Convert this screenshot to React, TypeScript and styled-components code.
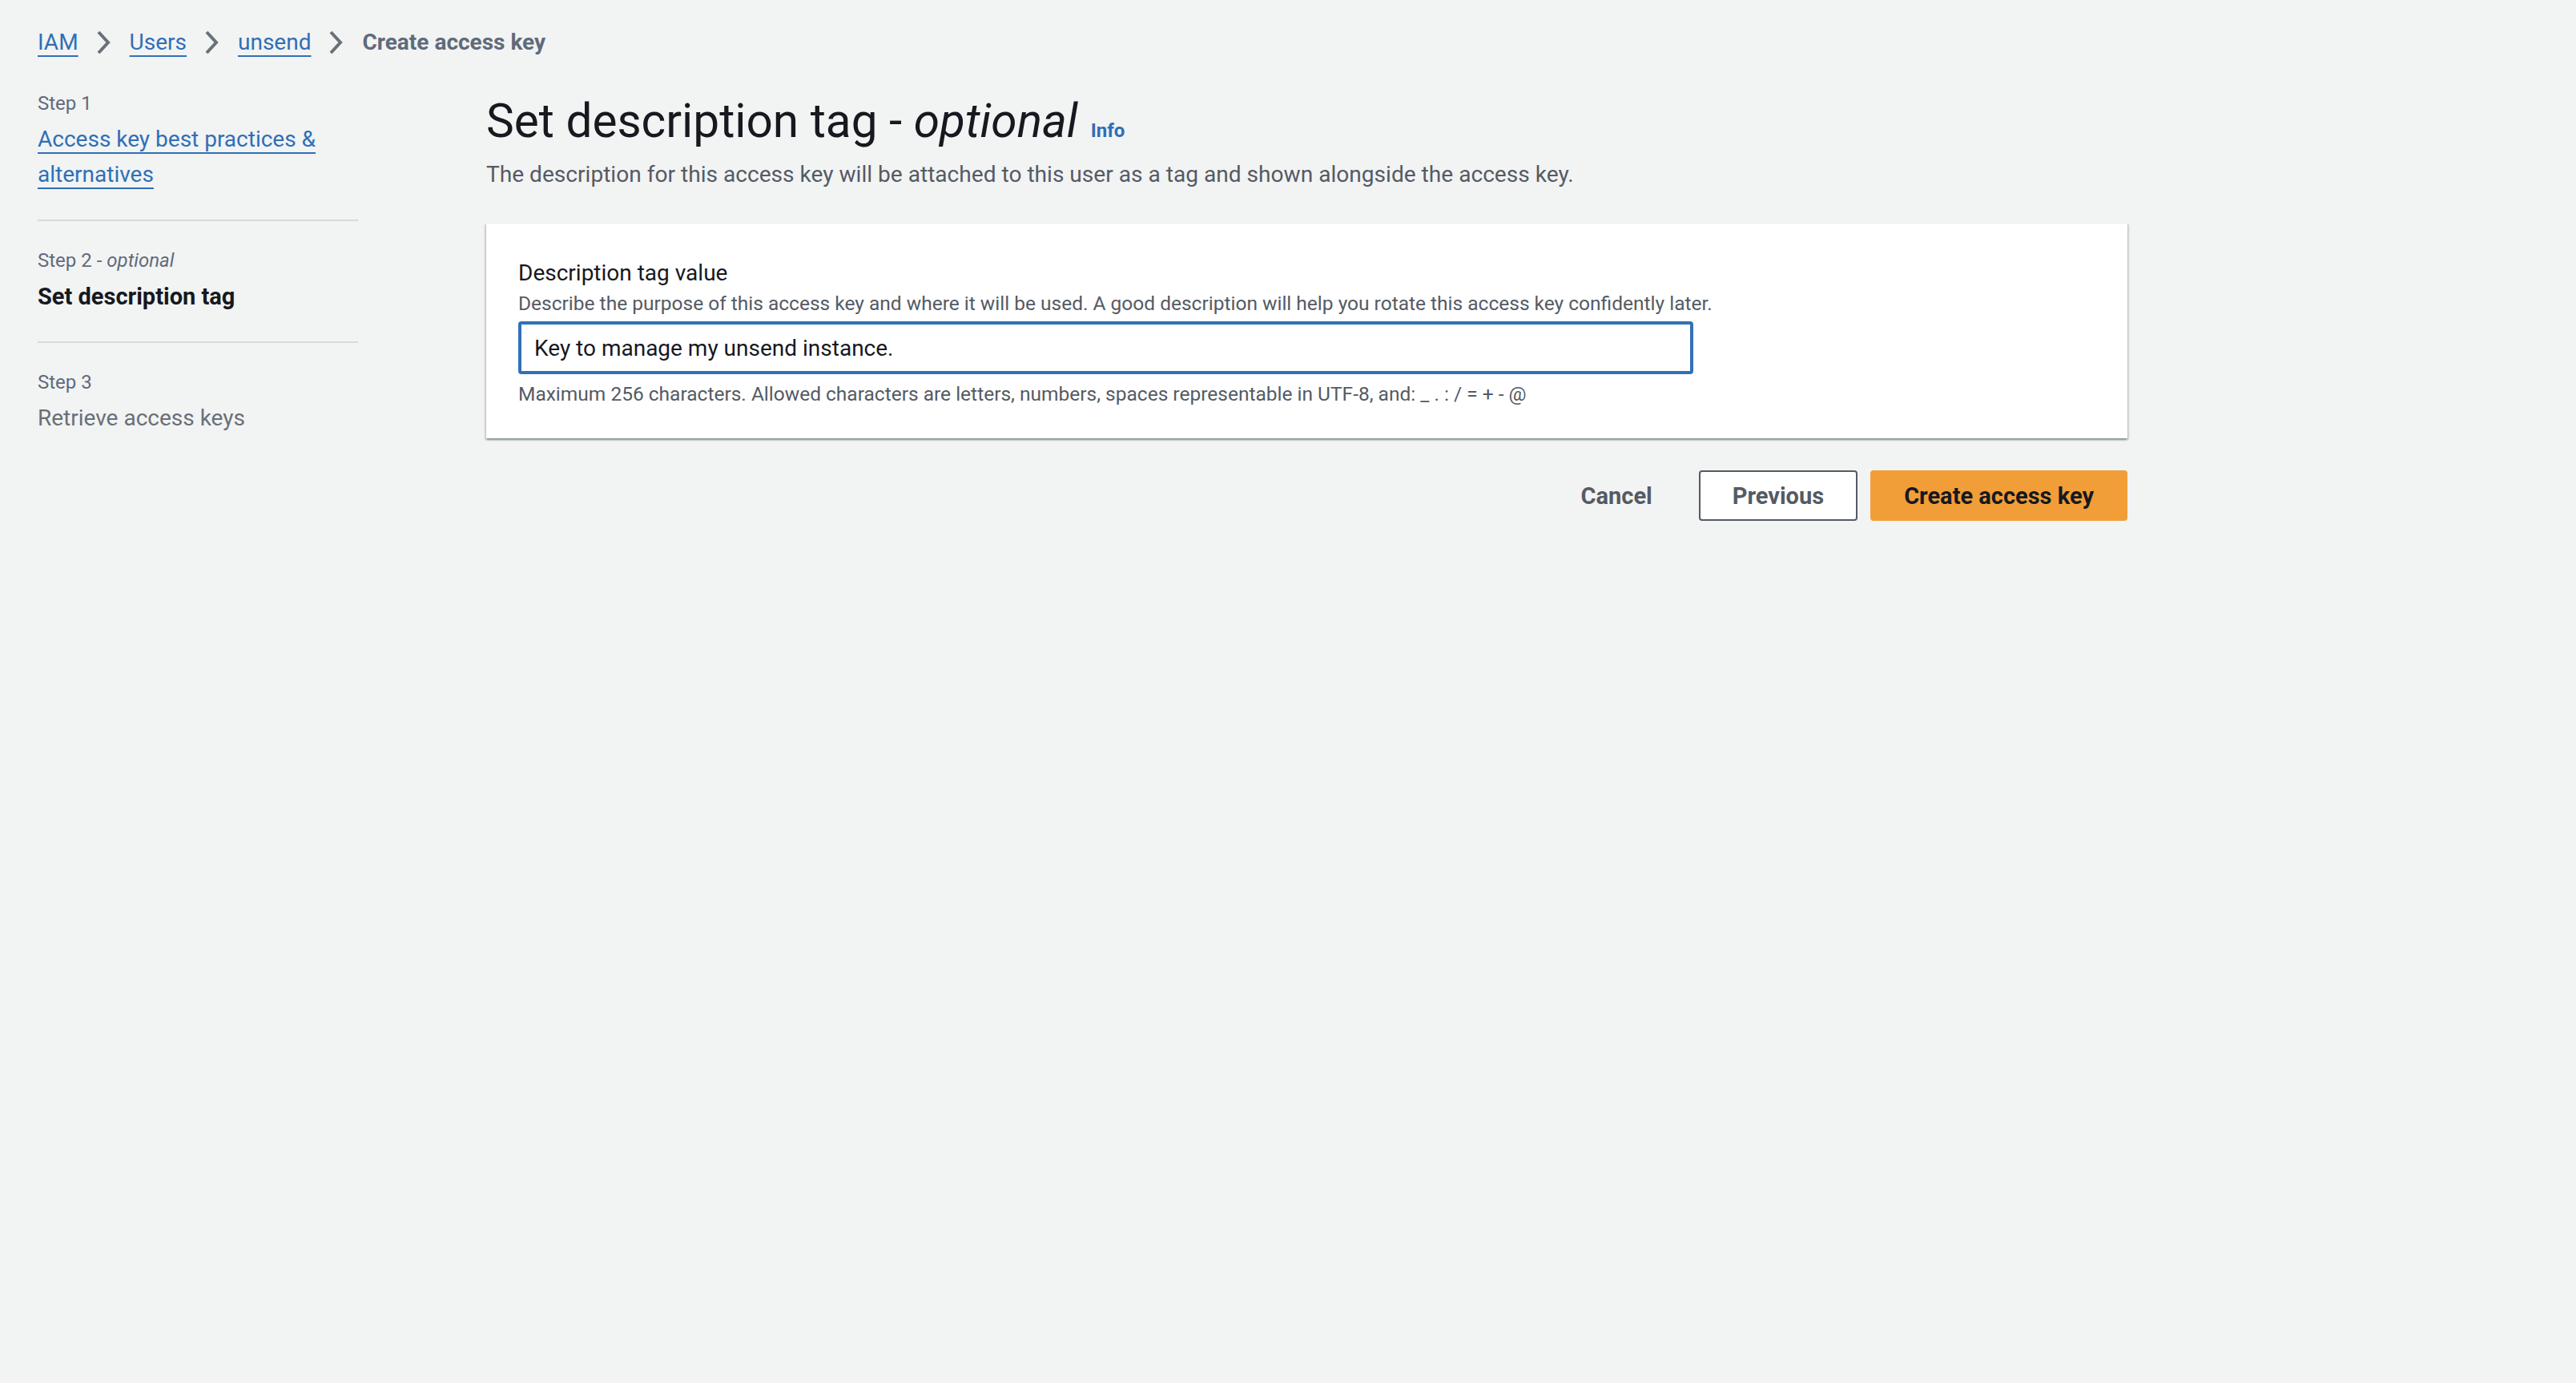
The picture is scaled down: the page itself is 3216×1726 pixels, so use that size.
import styled, { createGlobalStyle } from 'styled-components';

const GlobalStyle = createGlobalStyle`
  html, body {
    margin: 0;
    padding: 0;
    background: #f2f3f3;
  }
  body {
    font-family: Roboto, "Noto Sans", Arial, sans-serif;
    color: #16191f;
    min-height: 100vh;
  }
  * {
    box-sizing: border-box;
  }
`;

const Page = styled.div`
  padding: 31px 560px 0 47px;
  min-height: 1726px;
  background: #f2f3f3;
`;

const Breadcrumbs = styled.nav`
  display: flex;
  align-items: center;
  height: 44px;
  font-size: 28px;
  line-height: 44px;
`;

const Crumb = styled.a`
  color: #2f6fb7;
  text-decoration: underline;
  text-decoration-thickness: 2px;
  text-underline-offset: 7px;
`;

const CurrentCrumb = styled.span`
  color: #5f6b7a;
  font-weight: 700;
`;

const ChevronBox = styled.span`
  display: inline-flex;
  margin: 0 24px 0 22px;
  color: #687078;
`;

const Chevron = () => (
  <ChevronBox>
    <svg width="18" height="30" viewBox="0 0 18 30" fill="none">
      <path d="M3 2 L15 15 L3 28" stroke="currentColor" strokeWidth="4" strokeLinecap="butt" strokeLinejoin="miter" />
    </svg>
  </ChevronBox>
);

const Layout = styled.div`
  display: grid;
  grid-template-columns: 400px 2049px;
  column-gap: 160px;
  margin-top: 38px;
`;

const StepNav = styled.ol`
  list-style: none;
  margin: 0;
  padding: 0;
`;

const StepItem = styled.li<{ $first?: boolean; $last?: boolean }>`
  display: flex;
  flex-direction: column;
  gap: 7px;
  padding: ${p => (p.$first ? '0' : '33px')} 0 ${p => (p.$last ? '0' : '34px')};
  border-bottom: ${p => (p.$last ? 'none' : '2px solid #d5dbdb')};
`;

const StepLabel = styled.span`
  font-size: 24px;
  line-height: 32px;
  color: #5f6b7a;

  em {
    font-style: italic;
  }
`;

const StepTitle = styled.span<{ $state: 'link' | 'active' | 'disabled' }>`
  font-size: ${p => (p.$state === 'active' ? '29px' : '28px')};
  line-height: 44px;
  color: ${p => (p.$state === 'link' ? '#2f6fb7' : p.$state === 'active' ? '#16191f' : '#687078')};
  font-weight: ${p => (p.$state === 'active' ? 700 : 400)};
  text-decoration: ${p => (p.$state === 'link' ? 'underline' : 'none')};
  text-decoration-thickness: 2px;
  text-underline-offset: 7px;
  max-width: 360px;
`;

const Main = styled.main`
  display: flex;
  flex-direction: column;
  padding-top: 6px;
`;

const Heading = styled.h1`
  margin: 0;
  font-size: 58.5px;
  line-height: 64px;
  font-weight: 400;
  color: #16191f;

  em {
    font-style: italic;
  }
`;

const InfoLink = styled.a`
  margin-left: 16px;
  font-size: 24px;
  font-weight: 700;
  color: #2f6fb7;
  text-decoration: none;
`;

const Description = styled.p`
  margin: 1px 0 0;
  font-size: 28.1px;
  line-height: 44px;
  color: #545b64;
`;

const Panel = styled.section`
  margin-top: 38px;
  background: #ffffff;
  padding: 40px 40px 39px;
  border-top: 1px solid #eaeded;
  box-shadow: 0 2px 2px 0 rgba(0, 28, 36, 0.3), 2px 2px 2px 0 rgba(0, 28, 36, 0.12),
    -2px 2px 2px 0 rgba(0, 28, 36, 0.12);
  display: flex;
  flex-direction: column;
`;

const FieldLabel = styled.label`
  font-size: 28px;
  line-height: 44px;
  color: #16191f;
`;

const FieldHint = styled.span`
  font-size: 24.5px;
  line-height: 32px;
  color: #545b64;
`;

const TextInput = styled.input`
  margin-top: 6px;
  width: 1467px;
  height: 66px;
  padding: 0 16px;
  border: 4px solid #3171b8;
  border-radius: 4px;
  font-family: Roboto, "Noto Sans", Arial, sans-serif;
  font-size: 28px;
  color: #16191f;
  background: #ffffff;
  outline: none;
`;

const Constraint = styled.span`
  margin-top: 9px;
  font-size: 24.5px;
  line-height: 32px;
  color: #545b64;
`;

const Actions = styled.div`
  display: flex;
  justify-content: flex-end;
  align-items: center;
  gap: 16px;
  margin-top: 40px;
`;

const Button = styled.button<{ $variant: 'link' | 'normal' | 'primary' }>`
  height: 63px;
  padding: 0 40px;
  border-radius: 4px;
  font-family: Roboto, "Noto Sans", Arial, sans-serif;
  font-size: 29px;
  font-weight: 700;
  cursor: pointer;
  border: 2px solid
    ${p => (p.$variant === 'normal' ? '#545b64' : p.$variant === 'primary' ? '#f29e38' : 'transparent')};
  background: ${p => (p.$variant === 'primary' ? '#f29e38' : p.$variant === 'normal' ? '#ffffff' : 'transparent')};
  color: ${p => (p.$variant === 'primary' ? '#16191f' : '#545b64')};
`;

const App = () => {
  return (
    <>
      <GlobalStyle />
      <Page>
        <Breadcrumbs>
          <Crumb href="#">IAM</Crumb>
          <Chevron />
          <Crumb href="#">Users</Crumb>
          <Chevron />
          <Crumb href="#">unsend</Crumb>
          <Chevron />
          <CurrentCrumb>Create access key</CurrentCrumb>
        </Breadcrumbs>
        <Layout>
          <StepNav>
            <StepItem $first>
              <StepLabel>Step 1</StepLabel>
              <StepTitle $state="link">Access key best practices &amp; alternatives</StepTitle>
            </StepItem>
            <StepItem>
              <StepLabel>
                Step 2 - <em>optional</em>
              </StepLabel>
              <StepTitle $state="active">Set description tag</StepTitle>
            </StepItem>
            <StepItem $last>
              <StepLabel>Step 3</StepLabel>
              <StepTitle $state="disabled">Retrieve access keys</StepTitle>
            </StepItem>
          </StepNav>
          <Main>
            <Heading>
              Set description tag - <em>optional</em>
              <InfoLink href="#">Info</InfoLink>
            </Heading>
            <Description>
              The description for this access key will be attached to this user as a tag and shown alongside the
              access key.
            </Description>
            <Panel>
              <FieldLabel htmlFor="desc">Description tag value</FieldLabel>
              <FieldHint>
                Describe the purpose of this access key and where it will be used. A good description will help you
                rotate this access key confidently later.
              </FieldHint>
              <TextInput id="desc" defaultValue="Key to manage my unsend instance." />
              <Constraint>
                Maximum 256 characters. Allowed characters are letters, numbers, spaces representable in UTF-8, and: _
                . : / = + - @
              </Constraint>
            </Panel>
            <Actions>
              <Button $variant="link">Cancel</Button>
              <Button $variant="normal">Previous</Button>
              <Button $variant="primary">Create access key</Button>
            </Actions>
          </Main>
        </Layout>
      </Page>
    </>
  );
};

export default App;
